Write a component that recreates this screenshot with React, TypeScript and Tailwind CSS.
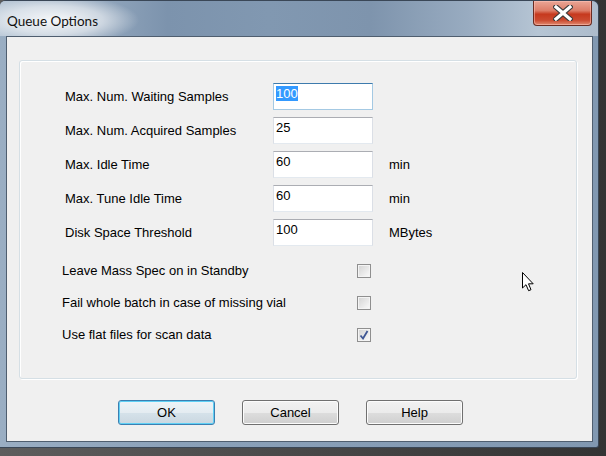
import React from "react";

const fields = [
  { label: "Max. Num. Waiting Samples", value: "100", unit: "", focused: true },
  { label: "Max. Num. Acquired Samples", value: "25", unit: "" },
  { label: "Max. Idle Time", value: "60", unit: "min" },
  { label: "Max. Tune Idle Time", value: "60", unit: "min" },
  { label: "Disk Space Threshold", value: "100", unit: "MBytes" },
];

const checks = [
  { label: "Leave Mass Spec on in Standby", checked: false },
  { label: "Fail whole batch in case of missing vial", checked: false },
  { label: "Use flat files for scan data", checked: true },
];

function TextBox({ value, focused }: { value: string; focused?: boolean }) {
  return (
    <div
      className={
        focused
          ? "w-[100px] h-[27px] bg-white border border-[#a4c9e3] border-t-[#3d7bad] pl-[2px] pt-[1px] leading-[17px]"
          : "w-[100px] h-[27px] bg-white border border-[#e3e9ef] border-t-[#abadb3] border-l-[#dbdfe6] border-r-[#dbdfe6] pl-[2px] pt-[1px] leading-[17px]"
      }
    >
      {focused ? <span className="bg-[#3399ff] text-white">{value}</span> : value}
    </div>
  );
}

function CheckBox({ checked }: { checked: boolean }) {
  return (
    <div className="w-[14px] h-[14px] border border-[#8f8f8f] bg-[#f4f4f4] p-[1px]">
      <div className="w-full h-full bg-[linear-gradient(135deg,#d6d6d6,#f8f8f8)] flex items-center justify-center">
        {checked && (
          <svg width="10" height="10" viewBox="0 0 10 10">
            <path d="M1.5 5.5 L4 8.5 L8.5 1" fill="none" stroke="#3f5794" strokeWidth="1.8" />
          </svg>
        )}
      </div>
    </div>
  );
}

function Button({ label, primary }: { label: string; primary?: boolean }) {
  return (
    <div
      className={
        primary
          ? "w-[97px] h-[25px] rounded-[3px] border border-[#3c7fb1] shadow-[inset_0_0_0_1px_#5fd0f5] bg-[linear-gradient(#eef4f8_0%,#e4ecf1_50%,#d5e2ea_51%,#cad7e0_100%)] flex items-center justify-center"
          : "w-[97px] h-[25px] rounded-[3px] border border-[#707070] shadow-[inset_0_0_0_1px_#fcfcfc] bg-[linear-gradient(#f2f2f2_0%,#ebebeb_50%,#dddddd_51%,#cfcfcf_100%)] flex items-center justify-center"
      }
    >
      {label}
    </div>
  );
}

export default function App() {
  return (
    <div className="relative w-[606px] h-[456px] overflow-hidden bg-[linear-gradient(90deg,#5d5d5d,#333)] font-['Liberation_Sans',Arial,sans-serif] text-[13px] text-black">
      <div className="relative w-[599px] h-[448px] rounded-tl-[6px] rounded-tr-[7px] rounded-br-[3px] border-t border-r border-b border-[#3a4757] bg-[linear-gradient(90deg,#9aaec3,#8ba1b9_30%,#8198b1_100%)] flex flex-col">
        <div className="relative h-[35px] shrink-0 overflow-hidden rounded-tl-[5px] rounded-tr-[6px] bg-[linear-gradient(90deg,#b3c3d3_0%,#95a9bf_15%,#7c93ad_28%,#8198b1_45%,#7e94ad_62%,#98abc0_78%,#b6c5d4_90%,#adbccc_100%)]">
          <div className="absolute -left-[30px] -top-[6px] w-[170px] h-[50px] bg-[radial-gradient(ellipse_at_center,rgba(255,255,255,0.9)_0%,rgba(255,255,255,0.55)_40%,rgba(255,255,255,0)_70%)]" />
          <div className="relative pl-[7px] pt-[10px] font-['Lato',sans-serif] text-[13.5px] text-[#111]">Queue Options</div>
          <div className="absolute left-[533px] top-0 w-[59px] h-[25px] rounded-b-[4px] border border-t-0 border-[#6a2c22] shadow-[inset_0_0_0_1px_rgba(255,200,190,0.5)] bg-[linear-gradient(#eaa696_0%,#dc7d68_40%,#c6391e_55%,#cb4a30_80%,#e08a70_100%)] flex items-center justify-center">
            <svg width="20" height="16" viewBox="0 0 20 16">
              <path d="M3 2 L17 14 M17 2 L3 14" stroke="#3b3b3b" strokeWidth="5.5" strokeLinecap="square" />
              <path d="M3 2 L17 14 M17 2 L3 14" stroke="#ffffff" strokeWidth="3.2" strokeLinecap="square" />
            </svg>
          </div>
        </div>
        <div className="flex pl-[6px]">
          <div className="w-[587px] h-[406px] border border-[#4f5e6f] bg-[#f0f0f0] flex flex-col">
            <div className="ml-[12px] mt-[23px] w-[558px] h-[319px] rounded-[3px] border border-[#d5dfe5] shadow-[inset_1px_1px_0_#ffffff,1px_1px_0_#ffffff] flex flex-col">
              <div className="pl-[45px] pt-[22px] flex flex-col gap-[7px]">
                {fields.map((f) => (
                  <div key={f.label} className="flex items-center h-[27px]">
                    <div className="w-[208px] pt-[1px]">{f.label}</div>
                    <TextBox value={f.value} focused={f.focused} />
                    <div className="ml-[16px] pt-[1px]">{f.unit}</div>
                  </div>
                ))}
              </div>
              <div className="pl-[42px] mt-[18px] flex flex-col gap-[18px]">
                {checks.map((c) => (
                  <div key={c.label} className="flex items-center h-[14px]">
                    <div className="w-[295px]">{c.label}</div>
                    <CheckBox checked={c.checked} />
                  </div>
                ))}
              </div>
            </div>
            <div className="ml-[111px] mt-[21px] flex gap-[27px]">
              <Button label="OK" primary />
              <Button label="Cancel" />
              <Button label="Help" />
            </div>
          </div>
        </div>
      </div>
      <svg className="absolute left-[522px] top-[272px]" width="13" height="20" viewBox="0 0 13 20">
        <path d="M0.5 0.5 L0.5 16 L4 12.7 L6.6 18.7 L9 17.7 L6.5 11.8 L11.2 11.8 Z" fill="#ffffff" stroke="#000000" strokeWidth="1" strokeLinejoin="miter" />
      </svg>
    </div>
  );
}
